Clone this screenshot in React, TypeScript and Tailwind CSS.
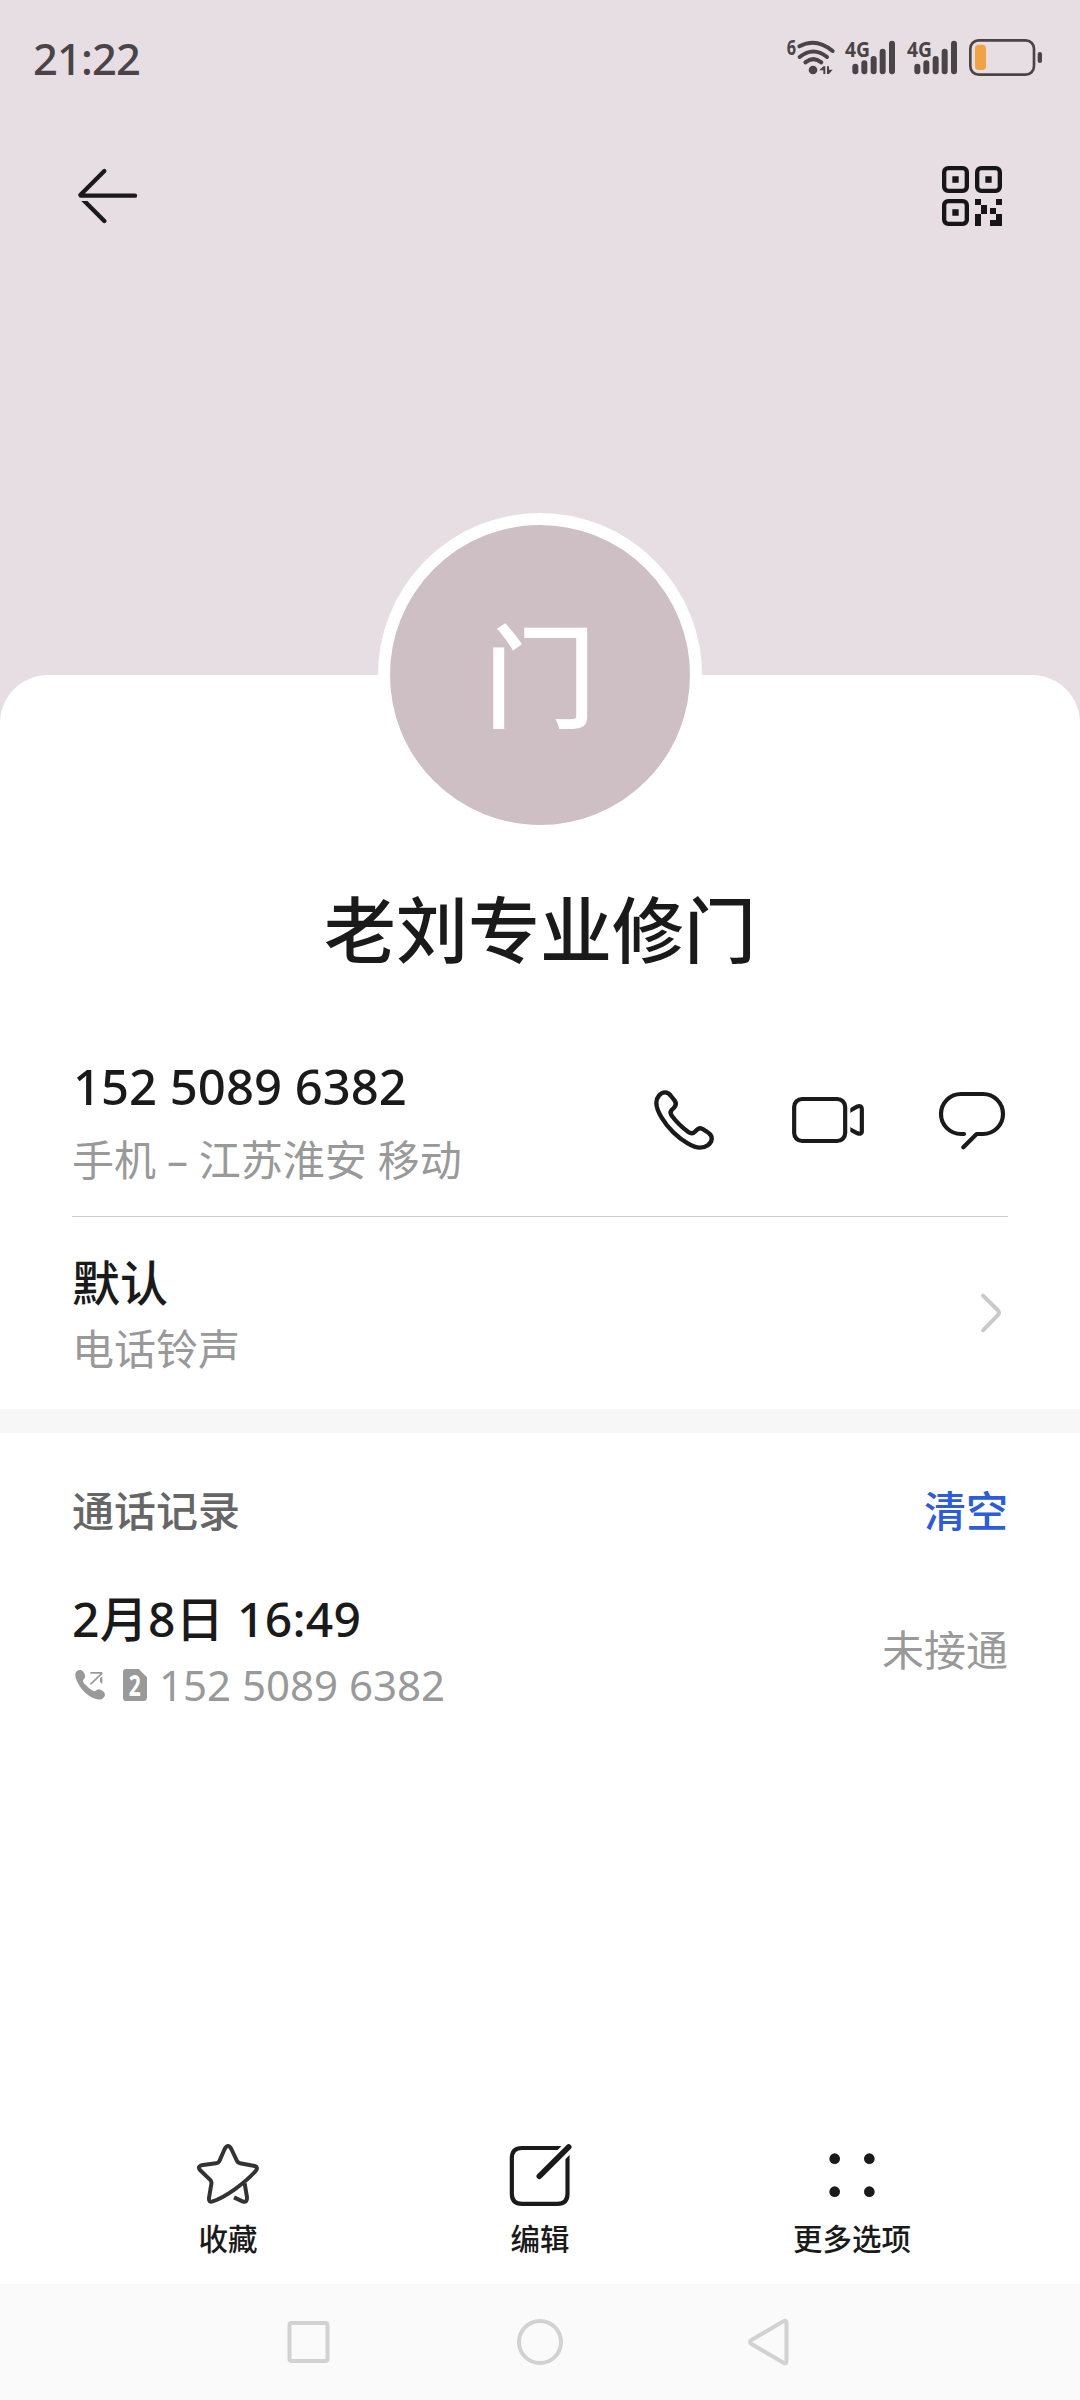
import type { ReactNode } from 'react'

const contact = {
  initial: '门',
  name: '老刘专业修门',
  phone: '152 5089 6382',
  location: '手机 – 江苏淮安 移动',
}

function WifiIcon() {
  return (
    <svg className="overflow-visible" width="59" height="45" viewBox="45 45 177 135" fill="none" stroke="#4a4448" strokeWidth="12" strokeLinecap="round">
      <text x="50" y="105" fontSize="64" fontWeight="700" fill="#4a4448" stroke="none" textLength="28" lengthAdjust="spacingAndGlyphs">6</text>
      <path d="M88 79 Q138 52 188 93" />
      <path d="M89 111 Q130 78 171 111" />
      <path d="M106 127 Q130 108 154 127" />
      <circle cx="129" cy="150" r="13" fill="#4a4448" stroke="none" />
      <path d="M148 151 L160 139 H166 V162 H160 V151Z M171 139 V162 H177 L188 149 H177 V139Z" fill="#4a4448" stroke="none" />
    </svg>
  )
}

function SignalIcon() {
  return (
    <svg className="overflow-visible" width="62" height="45" viewBox="222 45 186 135" fill="none" stroke="#4a4448" strokeWidth="18" strokeLinecap="round">
      <text x="225" y="110" fontSize="66" fontWeight="700" fill="#4a4448" stroke="none" textLength="75" lengthAdjust="spacingAndGlyphs">4G</text>
      <path d="M256 140 V154 M283 130 V154 M311 117 V154 M338 95 V154 M366 71 V154" />
    </svg>
  )
}

function BatteryIcon() {
  return (
    <svg width="75" height="45" viewBox="594 45 225 135" fill="none">
      <rect x="601" y="61" width="191" height="103" rx="25" stroke="#4a4448" strokeWidth="8" />
      <rect x="615" y="74" width="33" height="76" rx="11" fill="#f0a340" />
      <rect x="803" y="96" width="13" height="33" rx="6" fill="#4a4448" />
    </svg>
  )
}

function BackIcon() {
  return (
    <svg width="62" height="58" viewBox="231 441 186 174" fill="none" stroke="#1a1a1d" strokeWidth="13" strokeLinecap="round" strokeLinejoin="round">
      <clipPath id="back-lower">
        <rect x="231" y="543" width="186" height="72" />
      </clipPath>
      <path d="M313 453 L241 525 M243 527 H405" />
      <path d="M243 533 L313 603" clipPath="url(#back-lower)" />
    </svg>
  )
}

function QrIcon() {
  return (
    <svg width="60" height="60" viewBox="516 438 180 180" fill="none" stroke="#161619" strokeWidth="13">
      <rect x="522.5" y="444.5" width="68" height="68" rx="12" />
      <rect x="621.5" y="444.5" width="68" height="68" rx="12" />
      <rect x="522.5" y="543.5" width="68" height="68" rx="12" />
      <path
        d="M547 469h19v19h-19z M646 469h19v19h-19z M547 568h19v19h-19z M615 537h18v18h-18z M678 537h18v18h-18z M633 555h18v27h-18z M660 564h18v18h-18z M615 582h18v36h-18z M678 582h18v36h-36v-18h18z"
        fill="#161619"
        stroke="none"
      />
    </svg>
  )
}

function PhoneIcon() {
  return (
    <svg width="61" height="62" viewBox="72 87 183 186" fill="none" stroke="#1a1a1a" strokeWidth="13" strokeLinejoin="round">
      <path d="M79 128 C79 112 92 97 105 97 C113 97 119 102 123 108 L134 122 C140 130 138 137 132 143 L125 150 C120 156 121 162 126 168 C140 187 156 202 175 216 C182 221 190 221 196 214 C203 206 207 204 213 205 C220 207 228 214 236 219 C243 224 246 231 245 238 C243 252 228 263 210 263 C190 263 158 244 130 217 C102 190 79 152 79 128Z" />
    </svg>
  )
}

function VideoIcon() {
  return (
    <svg width="73" height="50" viewBox="486 105 219 150" fill="none" stroke="#1a1a1a" strokeWidth="12.5">
      <clipPath id="lens">
        <rect x="661" y="105" width="44" height="150" />
      </clipPath>
      <rect x="492.5" y="117" width="153" height="126" rx="24" />
      <path d="M652 156 L681 140 C690 136 695.500 139 695.500 146 V214 C695.500 221 690 223 681 219 L652 204" clipPath="url(#lens)" />
    </svg>
  )
}

function MessageIcon() {
  return (
    <svg width="68" height="59" viewBox="924 96 204 177" fill="none" stroke="#1a1a1a" strokeWidth="12.5" strokeLinecap="round" strokeLinejoin="round">
      <path d="M1002 225 H993 A60 60 0 0 1 993 105 H1059 A60 60 0 0 1 1059 225 H1040 L1000 265" />
    </svg>
  )
}

function ChevronIcon() {
  return (
    <svg width="24" height="42" viewBox="1047 696 72 126" fill="none" stroke="#c9c9c9" strokeWidth="12" strokeLinecap="round">
      <path d="M1059 707 L1103 750 Q1111 758 1103 766 L1059 811" />
    </svg>
  )
}

function OutgoingCallIcon() {
  return (
    <svg width="32" height="34" viewBox="72 801 96 102" fill="none">
      <path
        d="M77 815 C80 808 88 805 95 808 C100 811 103 817 105 822 C107 828 104 832 100 836 C98 840 100 845 105 850 C113 858 122 867 130 870 C135 872 138 868 142 866 C147 863 152 866 158 870 C165 875 167 881 163 887 C157 896 147 897 137 894 C112 885 88 862 78 833 C76 827 75 820 77 815Z"
        fill="#999"
      />
      <path d="M121 815.500 H157 M121 850 L156 817" stroke="#999" strokeWidth="5" />
      <path d="M157 826 V849 L150 843 V832Z" fill="#999" />
    </svg>
  )
}

function SimIcon() {
  return (
    <svg className="overflow-visible" width="24" height="34" viewBox="219 801 72 102">
      <path d="M229 804 H266 L291 829 V889 Q291 900 281 900 H229 Q219 900 219 890 V814 Q219 804 229 804Z" fill="#999" />
      <text x="236" y="885" fontSize="86" fontWeight="700" fill="#fff" textLength="36" lengthAdjust="spacingAndGlyphs">2</text>
    </svg>
  )
}

function StarIcon() {
  return (
    <svg width="64" height="62" viewBox="108 69 192 186" fill="none" stroke="#333" strokeWidth="12" strokeLinejoin="round">
      <path d="M158 244 C196 232 256 188 287 153 Q296 142 284 138 L240 130 Q234 129 231 123 L214 87 Q204 69 194 87 L179 121 Q176 129 168 130 L124 136 Q112 140 120 150 L149 178 Q156 184 154 192 L147 234 Q146 248 158 244Z" />
      <path d="M254 190 L261 232 Q262 248 249 245 L222 232" />
    </svg>
  )
}

function EditIcon() {
  return (
    <svg width="64" height="64" viewBox="1045 69 192 192" fill="none" stroke="#1a1a1a" strokeWidth="12.5">
      <path d="M1212 84 H1087 Q1056.500 84 1056.500 115 V221 Q1056.500 251.500 1087 251.500 H1193 Q1223.500 251.500 1223.500 221 V98" />
      <path d="M1175 134 L1242 67" stroke="#fff" strokeWidth="36" />
      <path d="M1139 169 L1227 81" strokeWidth="17" strokeLinecap="round" />
    </svg>
  )
}

function MoreIcon() {
  return (
    <svg width="64" height="64" viewBox="0 0 192 192" fill="#1a1a1a">
      <circle cx="44" cy="47" r="16" />
      <circle cx="148" cy="47" r="16" />
      <circle cx="44" cy="146" r="16" />
      <circle cx="148" cy="146" r="16" />
    </svg>
  )
}

function ToolbarItem({ label, children }: { label: string; children: ReactNode }) {
  return (
    <button className="flex flex-1 flex-col items-center">
      <span className="flex h-16 items-start">{children}</span>
      <span className="mt-[17px] text-[29.5px] leading-[30px] font-medium">{label}</span>
    </button>
  )
}

export default function App() {
  return (
    <div className="flex h-[2400px] w-[1080px] flex-col overflow-hidden bg-[#e6dee3] font-['Noto_Sans','Noto_Sans_CJK_SC',sans-serif] text-[#1a1a1a]">
      <header className="h-[675px] shrink-0">
        <div className="flex h-[115px] justify-between pt-[35px] pr-[37px] pl-[33px]">
          <span className="text-[43.500px] leading-[47px] font-medium tracking-[-0.9px] text-[#4a4448]">21:22</span>
          <div className="flex">
            <WifiIcon />
            <SignalIcon />
            <SignalIcon />
            <BatteryIcon />
          </div>
        </div>
        <div className="flex h-[162px] items-center justify-between pr-[78px] pl-[77px]">
          <BackIcon />
          <QrIcon />
        </div>
      </header>

      <main className="flex h-[1609px] shrink-0 flex-col rounded-t-[48px] bg-white">
        <div className="mx-auto -mt-[162px] flex h-[324px] w-[324px] shrink-0 items-center justify-center rounded-full border-[12px] border-white bg-[#cebfc5] text-[113px] leading-none font-medium text-white">
          {contact.initial}
        </div>
        <h1 className="mt-[56px] text-center text-[72px] leading-[72px] font-medium">{contact.name}</h1>

        <section className="px-[72px]">
          <div className="flex h-[252px] items-start justify-between border-b border-[#ccc] pt-[93px]">
            <div>
              <div className="pl-[1px] text-[49px] leading-[56px] font-medium">{contact.phone}</div>
              <div className="mt-[18px] text-[42px] leading-[56px] text-[#999]">{contact.location}</div>
            </div>
            <div className="flex items-center pt-[31px] pr-[2px]">
              <PhoneIcon />
              <span className="ml-[77px]"><VideoIcon /></span>
              <span className="ml-[73px]"><MessageIcon /></span>
            </div>
          </div>
          <div className="flex h-[192px] items-center justify-between pr-[5px]">
            <div className="pt-2">
              <div className="text-[48px] leading-[64px] font-medium">默认</div>
              <div className="text-[42px] leading-[68px] text-[#999]">电话铃声</div>
            </div>
            <ChevronIcon />
          </div>
        </section>

        <div className="h-6 shrink-0 bg-[#f7f7f7]" />

        <section className="px-[72px] pt-[50px]">
          <div className="flex items-center justify-between text-[42px] leading-[56px] font-medium">
            <h2 className="text-[#666]">通话记录</h2>
            <button className="text-[#2c5cdb]">清空</button>
          </div>
          <div className="mt-[44px] flex items-center justify-between">
            <div>
              <div className="text-[48px] leading-[72px] font-medium tracking-[0.3px]">2月8日 16:49</div>
              <div className="flex h-[60px] items-center text-[42px] text-[#999]">
                <span className="ml-[2px]"><OutgoingCallIcon /></span>
                <span className="ml-[17px]"><SimIcon /></span>
                <span className="ml-[12px] leading-[60px]">{contact.phone}</span>
              </div>
            </div>
            <span className="text-[42px] text-[#999]">未接通</span>
          </div>
        </section>

        <footer className="mt-auto flex h-[141px] shrink-0 px-[72px]">
          <ToolbarItem label="收藏"><StarIcon /></ToolbarItem>
          <ToolbarItem label="编辑"><EditIcon /></ToolbarItem>
          <ToolbarItem label="更多选项"><MoreIcon /></ToolbarItem>
        </footer>
      </main>

      <nav className="flex h-[116px] shrink-0 items-center justify-center gap-[183px] bg-[#fafafa]">
        <svg width="48" height="48" fill="none" stroke="#d2d2d2" strokeWidth="4">
          <rect x="4.5" y="5" width="38" height="38" rx="2" />
        </svg>
        <svg width="48" height="48" fill="none" stroke="#d2d2d2" strokeWidth="4">
          <circle cx="24" cy="24" r="21" />
        </svg>
        <svg width="48" height="48" fill="none" stroke="#d2d2d2" strokeWidth="4" strokeLinejoin="round">
          <path d="M4.500 22 L36 3.500 Q39.500 1.500 39.500 5 V43 Q39.500 46.500 36 44.500 L4.500 26 Q1.500 24 4.500 22Z" />
        </svg>
      </nav>
    </div>
  )
}
